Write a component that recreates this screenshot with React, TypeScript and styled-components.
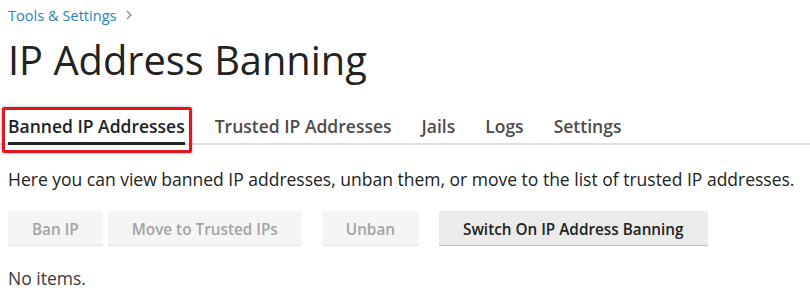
import React from 'react';
import styled, { createGlobalStyle } from 'styled-components';

const GlobalStyle = createGlobalStyle`
  html, body {
    margin: 0;
    padding: 0;
    background: #ffffff;
  }
  body {
    font-family: "Open Sans", "Liberation Sans", sans-serif;
    color: #222222;
  }
`;

const Page = styled.div`
  padding: 5px 8px 0 8px;
`;

const Breadcrumbs = styled.nav`
  display: flex;
  align-items: center;
  gap: 8px;
  height: 20px;
  font-size: 14.6px;
  line-height: 20px;
`;

const Crumb = styled.a`
  color: #2b84b5;
  text-decoration: none;
`;

const Chevron = styled.svg`
  width: 8px;
  height: 10px;
  color: #8c8c8c;
`;

const Title = styled.h1`
  margin: 7px 0 0 0;
  font-size: 39.8px;
  font-weight: 400;
  line-height: 56px;
  color: #222222;
`;

const TabBar = styled.div`
  display: flex;
  gap: 30px;
  margin: 24px -8px 0 -8px;
  padding: 0 8px;
  border-bottom: 2px solid #dedede;
`;

const Tab = styled.div<{ $active?: boolean }>`
  position: relative;
  padding: 2px 0 4px 0;
  font-size: 17.5px;
  font-weight: 600;
  line-height: 24px;
  color: ${p => (p.$active ? '#222222' : '#4e4b4b')};
  border-bottom: 3px solid ${p => (p.$active ? '#222222' : 'transparent')};
  margin-bottom: -2px;
  cursor: pointer;
`;

const Highlight = styled.span`
  position: absolute;
  left: -6px;
  right: -7px;
  top: -5px;
  bottom: -11px;
  border: 3px solid #e8131b;
  border-radius: 2px;
  box-shadow: 0 0 3px rgba(0, 0, 0, 0.35);
  pointer-events: none;
`;

const Description = styled.p`
  margin: 22px 0 0 0;
  font-size: 17.5px;
  line-height: 24px;
  color: #222222;
`;

const Toolbar = styled.div`
  display: flex;
  align-items: center;
  gap: 20px;
  margin-top: 20px;
`;

const Group = styled.div`
  display: flex;
  gap: 5px;
`;

const Button = styled.button<{ $primary?: boolean }>`
  height: 35px;
  padding: 0 24px;
  border: none;
  border-radius: 2px;
  font-family: inherit;
  font-size: 15.3px;
  font-weight: 600;
  background: ${p => (p.$primary ? '#ebebeb' : '#f5f5f5')};
  color: ${p => (p.$primary ? '#222222' : '#a3a3a3')};
  box-shadow: inset 0 -1px 0 ${p => (p.$primary ? '#bdbdbd' : '#e3e3e3')};
  cursor: ${p => (p.$primary ? 'pointer' : 'default')};
`;

const Empty = styled.p`
  margin: 20px 0 0 0;
  font-size: 17.5px;
  line-height: 24px;
  color: #3a3a3a;
`;

const tabs = ['Banned IP Addresses', 'Trusted IP Addresses', 'Jails', 'Logs', 'Settings'];

export default function App() {
  return (
    <>
      <GlobalStyle />
      <Page>
        <Breadcrumbs>
          <Crumb href="#">Tools &amp; Settings</Crumb>
          <Chevron viewBox="0 0 8 10" fill="none">
            <path d="M2 1l4 4-4 4" stroke="currentColor" strokeWidth="1.3" />
          </Chevron>
        </Breadcrumbs>
        <Title>IP Address Banning</Title>
        <TabBar>
          {tabs.map((t, i) => (
            <Tab key={t} $active={i === 0}>
              {t}
              {i === 0 && <Highlight />}
            </Tab>
          ))}
        </TabBar>
        <Description>
          Here you can view banned IP addresses, unban them, or move to the list of trusted IP addresses.
        </Description>
        <Toolbar>
          <Group>
            <Button disabled>Ban IP</Button>
            <Button disabled>Move to Trusted IPs</Button>
          </Group>
          <Button disabled>Unban</Button>
          <Button $primary>Switch On IP Address Banning</Button>
        </Toolbar>
        <Empty>No items.</Empty>
      </Page>
    </>
  );
}
